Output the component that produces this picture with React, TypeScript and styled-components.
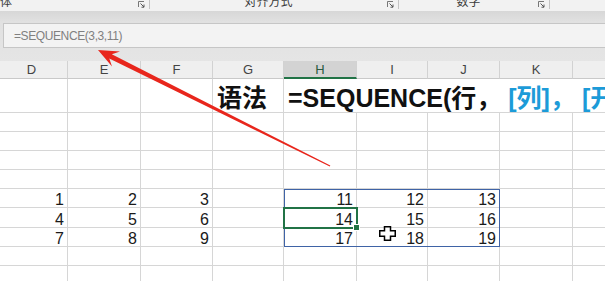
import React from 'react';
import styled, { createGlobalStyle } from 'styled-components';

const GlobalStyle = createGlobalStyle`
  html, body {
    margin: 0;
    padding: 0;
    background: #fff;
    overflow: hidden;
  }
  body {
    font-family: "Liberation Sans", "Noto Sans CJK SC", Arial, sans-serif;
  }
`;

const COLS = ['D', 'E', 'F', 'G', 'H', 'I', 'J', 'K', 'L'];
const WIDTHS = [72, 73, 72, 71, 73, 71, 72, 73, 73];
const ROW_HEIGHTS = [18, 34, 19, 19, 19, 19, 19, 20, 19, 19, 19];

// номера строк сетки (1 = заголовок)
const DATA: Record<number, (number | null)[]> = {
  7: [1, 2, 3, null, 11, 12, 13, null, null],
  8: [4, 5, 6, null, 14, 15, 16, null, null],
  9: [7, 8, 9, null, 17, 18, 19, null, null],
};

const Page = styled.div`
  position: relative;
  width: 605px;
  height: 281px;
  overflow: hidden;
  background: #fff;
`;

const Ribbon = styled.div`
  display: flex;
  height: 11px;
  background: #f2f2f2;
  overflow: hidden;
`;

const Group = styled.div<{ $w: number }>`
  display: flex;
  align-items: flex-start;
  flex: none;
  width: ${(p) => p.$w}px;
  height: 11px;
`;

const GroupLabel = styled.div<{ $align?: string; $shift?: number }>`
  flex: 1;
  margin-top: -4px;
  margin-left: ${(p) => p.$shift || 0}px;
  font-size: 12px;
  line-height: 12px;
  color: #3c3c3c;
  white-space: nowrap;
  text-align: ${(p) => p.$align || 'center'};
`;

const Launcher = styled.svg`
  flex: none;
  width: 7px;
  height: 7px;
  margin-top: 1px;
  margin-right: 4px;
`;

const Separator = styled.div`
  flex: none;
  width: 1px;
  height: 9px;
  background: #c4c4c4;
`;

const FormulaArea = styled.div`
  height: 50px;
  box-sizing: border-box;
  padding: 12px 0 0 3px;
  background: linear-gradient(#d7d7d7 0, #e1e1e1 11px, #e5e5e5 100%);
`;

const FormulaBox = styled.div`
  height: 25px;
  box-sizing: border-box;
  display: flex;
  align-items: center;
  padding-left: 10px;
  background: #f3f3f3;
  border: 1px solid #c6c6c6;
  border-right: none;
  color: #808080;
  font-size: 12px;
  letter-spacing: -0.4px;
`;

const Sheet = styled.div`
  display: grid;
  grid-template-columns: ${WIDTHS.map((w) => `${w}px`).join(' ')};
  grid-template-rows: ${ROW_HEIGHTS.map((h) => `${h}px`).join(' ')};
  margin-left: -4px;
`;

const HeaderCell = styled.div<{ $c: number; $active?: boolean }>`
  grid-row: 1;
  grid-column: ${(p) => p.$c};
  box-sizing: border-box;
  display: flex;
  align-items: center;
  justify-content: center;
  background: ${(p) => (p.$active ? '#d3d3d3' : '#efefef')};
  border-right: 1px solid #d2d2d2;
  border-bottom: ${(p) => (p.$active ? '2px solid #217346' : '1px solid #c9c9c9')};
  color: ${(p) => (p.$active ? '#2a5a40' : '#444')};
  font-size: 13px;
`;

const Cell = styled.div<{ $r: number; $c: number }>`
  grid-row: ${(p) => p.$r};
  grid-column: ${(p) => p.$c};
  box-sizing: border-box;
  display: flex;
  align-items: flex-end;
  justify-content: flex-end;
  padding-right: 3px;
  border-right: 1px solid #d6d6d6;
  border-bottom: 1px solid #d6d6d6;
  color: #1a1a1a;
  font-size: 16px;
  line-height: 14px;
`;

const TitleCell = styled.div<{ $c: string }>`
  grid-row: 2;
  grid-column: ${(p) => p.$c};
  box-sizing: border-box;
  display: flex;
  align-items: center;
  padding-left: 4px;
  border-right: 1px solid #d6d6d6;
  border-bottom: 1px solid #d6d6d6;
  font-size: 25px;
  font-weight: bold;
  color: #111;
  white-space: nowrap;
  overflow: hidden;
`;

const Arg = styled.span<{ $optional?: boolean }>`
  color: ${(p) => (p.$optional ? '#1c9bd8' : '#111')};
`;

const Comma = styled.span`
  margin-right: 7px;
`;

const Selection = styled.div`
  grid-row: 7 / 10;
  grid-column: 5 / 8;
  border: 1px solid #3f63a6;
  pointer-events: none;
  z-index: 1;
`;

const ActiveCell = styled.div`
  grid-row: 8;
  grid-column: 5;
  margin: -1px;
  position: relative;
  border: 2px solid #217346;
  pointer-events: none;
  z-index: 2;
`;

const FillHandle = styled.div`
  position: absolute;
  right: -4px;
  bottom: -4px;
  width: 5px;
  height: 5px;
  background: #217346;
  border: 1px solid #fff;
  box-sizing: content-box;
`;

const Cursor = styled.svg`
  position: absolute;
  left: 379px;
  top: 226px;
  width: 17px;
  height: 15px;
  z-index: 4;
`;

const ArrowLayer = styled.svg`
  position: absolute;
  left: 0;
  top: 0;
  width: 605px;
  height: 281px;
  pointer-events: none;
  z-index: 5;
`;

const groups = [
  { w: 150, label: '字体', align: 'left', shift: -12 },
  { w: 249, label: '对齐方式' },
  { w: 151, label: '数字' },
];

const LauncherIcon = () => (
  <Launcher viewBox="0 0 7 7">
    <path d="M0.5 6 V0.5 H6" fill="none" stroke="#777" strokeWidth="1" />
    <path d="M2.5 2.5 L6 6 M6 3.5 V6.2 H3.5" fill="none" stroke="#555" strokeWidth="1" />
  </Launcher>
);

const App: React.FC = () => {
  const bodyRows = ROW_HEIGHTS.length;

  return (
    <Page>
      <GlobalStyle />
      <Ribbon>
        {groups.map((g) => (
          <Group key={g.label} $w={g.w}>
            <GroupLabel $align={g.align} $shift={g.shift}>{g.label}</GroupLabel>
            <LauncherIcon />
            <Separator />
          </Group>
        ))}
      </Ribbon>

      <FormulaArea>
        <FormulaBox>=SEQUENCE(3,3,11)</FormulaBox>
      </FormulaArea>

      <Sheet>
        {COLS.map((col, i) => (
          <HeaderCell key={col} $c={i + 1} $active={col === 'H'}>
            {col}
          </HeaderCell>
        ))}

        {['D', 'E', 'F'].map((col, i) => (
          <Cell key={`t-${col}`} $r={2} $c={i + 1} />
        ))}
        <TitleCell $c="4">语法</TitleCell>
        <TitleCell $c="5 / -1">
          <Arg>=SEQUENCE(行<Comma>，</Comma></Arg>
          <Arg $optional>[列]<Comma>，</Comma>[开始]<Comma>，</Comma>[步长])</Arg>
        </TitleCell>

        {Array.from({ length: bodyRows - 2 }, (_, k) => k + 3).map((r) =>
          COLS.map((col, c) => (
            <Cell key={`${col}${r}`} $r={r} $c={c + 1}>
              {DATA[r]?.[c] ?? ''}
            </Cell>
          ))
        )}

        <Selection />
        <ActiveCell>
          <FillHandle />
        </ActiveCell>
      </Sheet>

      <Cursor viewBox="0 0 17 15">
        <path
          d="M5.5 0.75 H11.5 V4.75 H16.25 V10.25 H11.5 V14.25 H5.5 V10.25 H0.75 V4.75 H5.5 Z"
          fill="#fff"
          stroke="#000"
          strokeWidth="1.5"
          strokeLinejoin="miter"
        />
      </Cursor>

      <ArrowLayer viewBox="0 0 605 281">
        <polygon
          points="98,50 120,51.5 111.8,54.2 330.3,165.6 329.8,166.5 109.3,58.6 112,66.5"
          fill="#e8261c"
        />
      </ArrowLayer>
    </Page>
  );
};

export default App;
